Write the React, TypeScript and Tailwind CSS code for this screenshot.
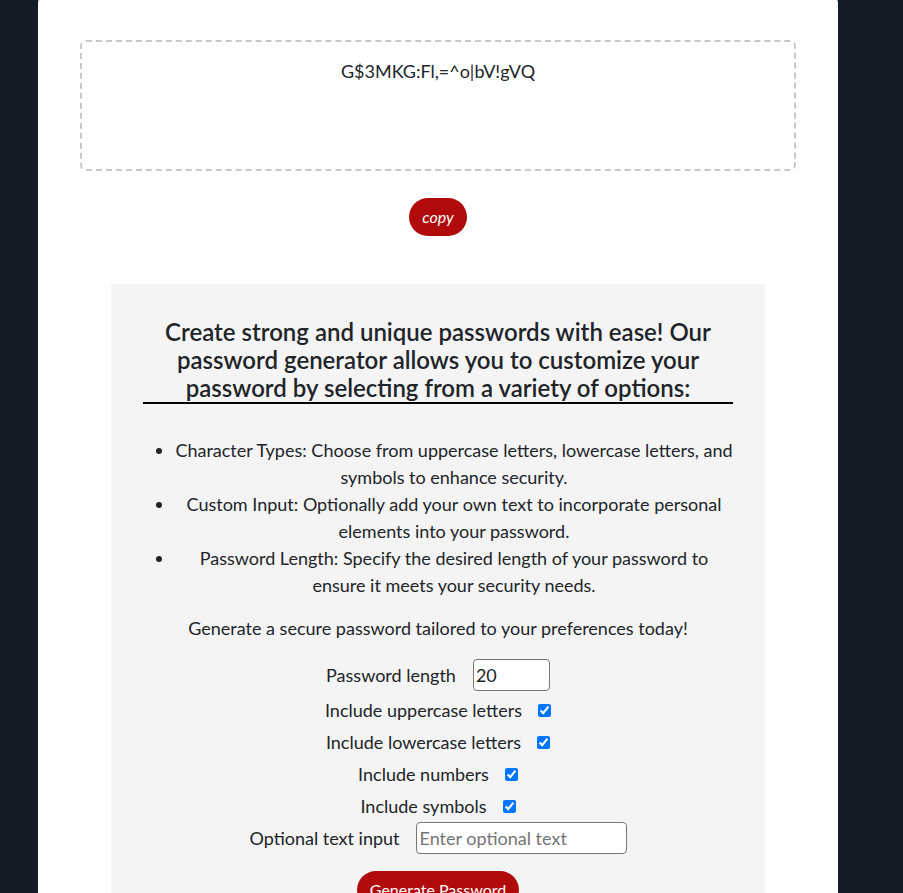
import { useState } from 'react';

export default function App() {
    const [length, setLength] = useState('20');
    const [upper, setUpper] = useState(true);
    const [lower, setLower] = useState(true);
    const [numbers, setNumbers] = useState(true);
    const [symbols, setSymbols] = useState(true);
    const [extra, setExtra] = useState('');

    return (
        <div className="min-h-screen bg-[#151b26] overflow-hidden font-['Lato',_'Noto_Sans',_sans-serif] text-[#212529]">
            <div className="ml-[38px] w-[800px] -mt-[5px] bg-white rounded-lg pt-[45px] pb-10 flex flex-col items-center">
                <div className="w-[716px] h-[131px] border-2 border-dashed border-[#c4c8cf] rounded-md pt-[16px] text-center text-[18px] leading-[27px]">
                    G$3MKG:Fl,=^o|bV!gVQ
                </div>

                <button className="mt-[27px] h-[38px] px-[13px] rounded-full bg-[#b00a0a] text-white italic text-[16px]">
                    copy
                </button>

                <div className="mt-[48px] w-[654px] bg-[#f4f4f4] px-[32px] pt-[34px] pb-10 flex flex-col items-center">
                    <h2 className="w-full text-center text-[24px] leading-[28px] font-semibold border-b-2 border-black">
                        Create strong and unique passwords with ease! Our password generator allows you to customize your password by selecting from a variety of options:
                    </h2>

                    <ul className="w-full mt-[33px] pl-[32px] list-disc text-center text-[18px] leading-[27px]">
                        <li>Character Types: Choose from uppercase letters, lowercase letters, and symbols to enhance security.</li>
                        <li>Custom Input: Optionally add your own text to incorporate personal elements into your password.</li>
                        <li>Password Length: Specify the desired length of your password to ensure it meets your security needs.</li>
                    </ul>

                    <p className="mt-[16px] text-[18px] leading-[27px] text-center">
                        Generate a secure password tailored to your preferences today!
                    </p>

                    <div className="mt-[17px] flex flex-col items-center text-[18px] leading-[27px]">
                        <label className="h-[32px] flex items-center gap-[17px]">
                            Password length
                            <input
                                type="number"
                                value={length}
                                onChange={e => setLength(e.target.value)}
                                className="w-[77px] h-[32px] bg-white border border-[#767676] rounded-sm px-[2px] text-[18px] [appearance:textfield]"
                            />
                        </label>
                        <label className="mt-[6px] h-[27px] flex items-center gap-[16px]">
                            Include uppercase letters
                            <input type="checkbox" checked={upper} onChange={e => setUpper(e.target.checked)} className="w-[13px] h-[13px]" />
                        </label>
                        <label className="mt-[5px] h-[27px] flex items-center gap-[16px]">
                            Include lowercase letters
                            <input type="checkbox" checked={lower} onChange={e => setLower(e.target.checked)} className="w-[13px] h-[13px]" />
                        </label>
                        <label className="mt-[5px] h-[27px] flex items-center gap-[16px]">
                            Include numbers
                            <input type="checkbox" checked={numbers} onChange={e => setNumbers(e.target.checked)} className="w-[13px] h-[13px]" />
                        </label>
                        <label className="mt-[5px] h-[27px] flex items-center gap-[16px]">
                            Include symbols
                            <input type="checkbox" checked={symbols} onChange={e => setSymbols(e.target.checked)} className="w-[13px] h-[13px]" />
                        </label>
                        <label className="mt-[2px] h-[32px] flex items-center gap-[16px]">
                            Optional text input
                            <input
                                type="text"
                                value={extra}
                                placeholder="Enter optional text"
                                onChange={e => setExtra(e.target.value)}
                                className="w-[211px] h-[32px] bg-white border border-[#767676] rounded-sm px-[3px] text-[18px] placeholder:text-[#757575]"
                            />
                        </label>
                    </div>

                    <button className="mt-[17px] h-[38px] px-[13px] rounded-full bg-[#b00a0a] text-white text-[16px]">
                        Generate Password
                    </button>
                </div>
            </div>
        </div>
    );
}
